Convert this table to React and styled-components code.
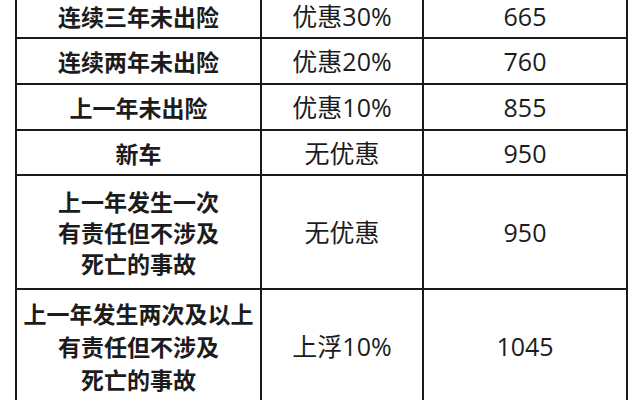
import React from "react";
import styled, { createGlobalStyle } from "styled-components";

const Global = createGlobalStyle`
  html, body {
    margin: 0;
    background: #ffffff;
    overflow: hidden;
  }
  body {
    font-family: "Noto Sans CJK SC", "Noto Sans", sans-serif;
    color: #1c1c1c;
  }
`;

const Page = styled.div`
  width: 640px;
  height: 400px;
  overflow: hidden;
`;

const Table = styled.table`
  margin: 0 0 0 15px;
  border-collapse: collapse;
  table-layout: fixed;
  width: 611px;
`;

const Col = styled.col`
  width: ${(p) => p.w}px;
`;

const Row = styled.tr`
  &:first-child > td {
    border-top: none;
    padding-bottom: 5px;
  }
`;

const Cell = styled.td`
  border: 2px solid #1a1a1a;
  text-align: center;
  vertical-align: middle;
  padding: 0;
  height: ${(p) => p.h}px;
  line-height: ${(p) => p.lh || 32}px;
  white-space: nowrap;
`;

const NameCell = styled(Cell)`
  font-size: 23px;
  font-weight: 700;
`;

const ValueCell = styled(Cell)`
  font-family: "Open Sans", "Noto Sans CJK SC", sans-serif;
  font-size: 25px;
  font-weight: 400;
`;

const rows = [
  { h: 30, name: ["连续三年未出险"], rate: "优惠30%", fee: "665" },
  { h: 44, name: ["连续两年未出险"], rate: "优惠20%", fee: "760" },
  { h: 44, name: ["上一年未出险"], rate: "优惠10%", fee: "855" },
  { h: 43, name: ["新车"], rate: "无优惠", fee: "950" },
  {
    h: 112,
    lh: 31,
    name: ["上一年发生一次", "有责任但不涉及", "死亡的事故"],
    rate: "无优惠",
    fee: "950",
  },
  {
    h: 112,
    lh: 33,
    name: ["上一年发生两次及以上", "有责任但不涉及", "死亡的事故"],
    rate: "上浮10%",
    fee: "1045",
  },
];

export default function App() {
  return (
    <Page>
      <Global />
      <Table>
        <colgroup>
          <Col w={245} />
          <Col w={162} />
          <Col w={204} />
        </colgroup>
        <tbody>
          {rows.map((r, i) => (
            <Row key={i}>
              <NameCell h={r.h} lh={r.lh}>
                {r.name.map((line, j) => (
                  <div key={j}>{line}</div>
                ))}
              </NameCell>
              <ValueCell h={r.h}>{r.rate}</ValueCell>
              <ValueCell h={r.h}>{r.fee}</ValueCell>
            </Row>
          ))}
        </tbody>
      </Table>
    </Page>
  );
}
